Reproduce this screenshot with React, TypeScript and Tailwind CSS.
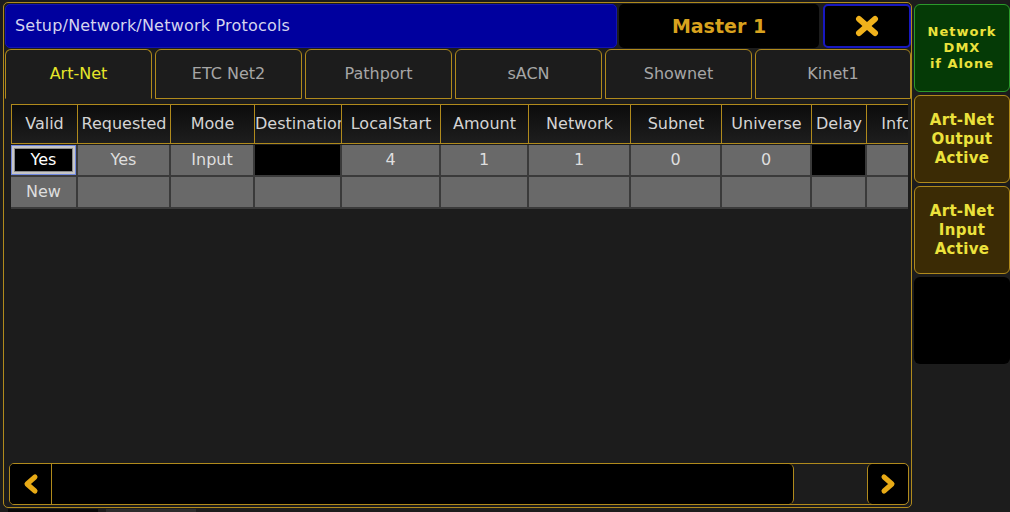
import React from 'react';

// 网络协议设置页 — 深色控台风格
const GOLD = 'border-[#b08a1c]';

const COLS = 'grid-cols-[67px_93px_84px_87px_99px_88px_102px_91px_90px_55px_60px]';

const headers = ['Valid', 'Requested', 'Mode', 'Destination', 'LocalStart', 'Amount', 'Network', 'Subnet', 'Universe', 'Delay', 'Info'];

type Cell = { text?: string; black?: boolean; selected?: boolean };

const rows: Cell[][] = [
  [
    { text: 'Yes', selected: true },
    { text: 'Yes' },
    { text: 'Input' },
    { black: true },
    { text: '4' },
    { text: '1' },
    { text: '1' },
    { text: '0' },
    { text: '0' },
    { black: true },
    {},
  ],
  [{ text: 'New' }, {}, {}, {}, {}, {}, {}, {}, {}, {}, {}],
];

const tabs = ['Art-Net', 'ETC Net2', 'Pathport', 'sACN', 'Shownet', 'Kinet1'];

const Chevron = ({ dir }: { dir: 'left' | 'right' }) => (
  <svg width="18" height="22" viewBox="0 0 18 22">
    <polyline
      points={dir === 'left' ? '13,4 5,11 13,18' : '5,4 13,11 5,18'}
      fill="none"
      stroke="#e8aa16"
      strokeWidth={5}
      strokeLinecap="round"
      strokeLinejoin="round"
    />
  </svg>
);

const SideButton = ({ lines, variant, small }: { lines: string[]; variant: 'green' | 'brown'; small?: boolean }) => (
  <div
    className={
      variant === 'green'
        ? 'h-[88px] rounded-[6px] border border-[#2b9a2b] bg-[#053a06] flex flex-col items-center justify-center'
        : 'h-[88px] rounded-[6px] border border-[#b08a1c] bg-[#3b2b05] flex flex-col items-center justify-center'
    }
  >
    {lines.map((l) => (
      <span
        key={l}
        className={
          small
            ? 'text-[13px] leading-[16px] font-bold tracking-[1px] text-[#ece23c]'
            : 'text-[15px] leading-[19px] font-bold tracking-[0.3px] text-[#ece23c]'
        }
      >
        {l}
      </span>
    ))}
  </div>
);

export default function App() {
  return (
    <div className="w-[1010px] h-[512px] bg-[#1c1c1c] flex overflow-hidden font-['DejaVu_Sans',sans-serif]">
      {/* 左侧主窗口 */}
      <div className="flex flex-col ml-[3px] mt-[2px]">
        <div className={`w-[909px] h-[507px] border ${GOLD} rounded-[5px] flex flex-col pl-[1px]`}>
          {/* 标题栏 */}
          <div className="flex h-[44px] mt-[1px]">
            <div className="w-[612px] rounded-[5px] bg-[#00009e] border border-[#1414b4] flex items-center pl-[9px] text-[16px] tracking-[0.2px] text-[#d4d4ee]">
              Setup/Network/Network Protocols
            </div>
            <div className="w-[200px] ml-[2px] rounded-[5px] bg-black flex items-center justify-center text-[19px] font-bold text-[#d8a21e]">
              Master 1
            </div>
            <div className="w-[88px] ml-[4px] rounded-[5px] bg-black border-2 border-[#1818c0] flex items-center justify-center">
              <svg width="26" height="22" viewBox="0 0 26 22">
                <g stroke="#f0b21c" strokeWidth={6} strokeLinecap="round">
                  <line x1="5" y1="4" x2="21" y2="18" />
                  <line x1="21" y1="4" x2="5" y2="18" />
                </g>
              </svg>
            </div>
          </div>

          {/* 标签页 */}
          <div className="flex h-[50px] mt-[1px]">
            {tabs.map((t, i) => (
              <div
                key={t}
                className={[
                  i === tabs.length - 1 ? 'flex-1' : 'w-[147px] mr-[3px]',
                  'rounded-t-[6px] border bg-[#1c1c1c] flex items-center justify-center text-[16px]',
                  GOLD,
                  i === 0 ? 'border-b-transparent text-[#e6e62a]' : 'text-[#a6a6a6]',
                ].join(' ')}
              >
                {t}
              </div>
            ))}
          </div>

          {/* 表格 */}
          <div className="flex-1 pt-[5px] pl-[6px]">
            <div className="w-[897px] overflow-hidden">
              <div className={`grid ${COLS} h-[40px]`}>
                {headers.map((h, i) => (
                  <div
                    key={h}
                    className={[
                      'border-y border-r bg-gradient-to-b from-[#0c0c0c] to-[#1e1e1e] flex items-center overflow-hidden',
                      GOLD,
                      i === 0 ? 'border-l' : '',
                    ].join(' ')}
                  >
                    <div className="w-full text-center whitespace-nowrap overflow-hidden text-[16px] text-[#d4d4d4]">{h}</div>
                  </div>
                ))}
              </div>
              <div className="mt-[1px] flex flex-col">
                {rows.map((r, ri) => (
                  <div key={ri} className={`grid ${COLS} h-[32px]`}>
                    {r.map((c, ci) => (
                      <div key={ci} className="h-[32px] pr-[2px] pb-[2px] bg-[#3a3a3a]">
                        {c.selected ? (
                          <div className="h-full border border-[#7088e0] bg-[#c6c6c6] p-[2px]">
                            <div className="h-full bg-black border border-[#8a8a8a] flex items-center justify-center text-[16px] text-white">
                              {c.text}
                            </div>
                          </div>
                        ) : (
                          <div
                            className={[
                              'h-full flex items-center justify-center text-[16px] text-[#dedede]',
                              c.black ? 'bg-black' : 'bg-[#696969]',
                            ].join(' ')}
                          >
                            {c.text}
                          </div>
                        )}
                      </div>
                    ))}
                  </div>
                ))}
              </div>
            </div>
          </div>

          {/* 底部滚动条 */}
          <div className={`ml-[4px] mr-[2px] mb-[2px] h-[42px] flex border ${GOLD} rounded-[5px] bg-[#1c1c1c]`}>
            <div className={`w-[42px] bg-black rounded-l-[4px] border-r ${GOLD} flex items-center justify-center`}>
              <Chevron dir="left" />
            </div>
            <div className={`w-[742px] bg-black rounded-r-[5px] border-r ${GOLD}`} />
            <div className="flex-1" />
            <div className={`w-[41px] bg-black rounded-[5px] border-l ${GOLD} flex items-center justify-center`}>
              <Chevron dir="right" />
            </div>
          </div>
        </div>
        <div className="flex mt-[1px] ml-[5px] gap-[8px]">
          <div className="w-[90px] h-[3px] bg-[#080808]" />
          <div className="w-[90px] h-[3px] bg-[#2c2c2c]" />
        </div>
      </div>

      {/* 右侧按钮栏 */}
      <div className="w-[96px] ml-[2px] pt-[4px] flex flex-col gap-[3px]">
        <SideButton variant="green" small lines={['Network', 'DMX', 'if Alone']} />
        <SideButton variant="brown" lines={['Art-Net', 'Output', 'Active']} />
        <SideButton variant="brown" lines={['Art-Net', 'Input', 'Active']} />
        <div className="h-[87px] rounded-[6px] bg-black" />
      </div>
    </div>
  );
}
